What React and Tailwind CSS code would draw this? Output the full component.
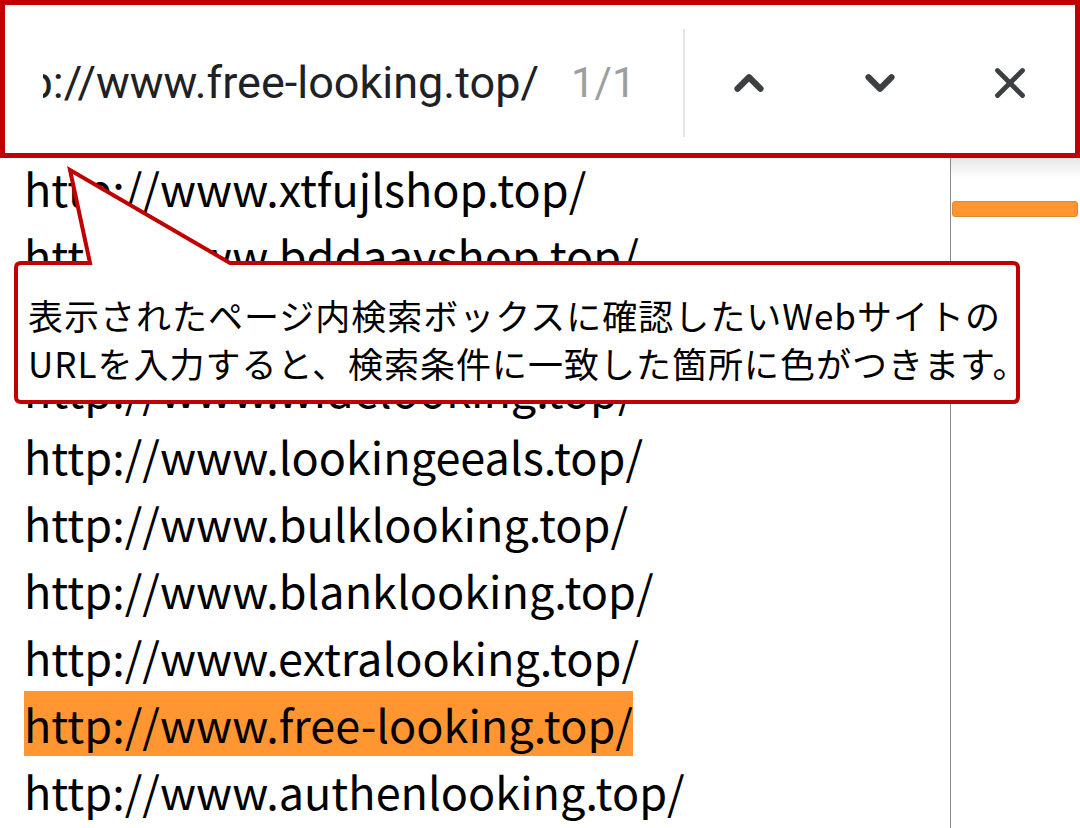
import { ChevronUp, ChevronDown, X } from "lucide-react";

const urls = [
  "http://www.xtfujlshop.top/",
  "http://www.bddaayshop.top/",
  "http://www.mookilooking.top/",
  "http://www.widelooking.top/",
  "http://www.lookingeeals.top/",
  "http://www.bulklooking.top/",
  "http://www.blanklooking.top/",
  "http://www.extralooking.top/",
  "http://www.free-looking.top/",
  "http://www.authenlooking.top/",
];

const FindBar = () => (
  <div className="h-[158px] border-[5px] border-[#c00000] bg-white flex items-center pt-[7px] shrink-0">
    <div className="ml-[38px] w-[497px] h-[60px] pr-[1px] flex items-center justify-end overflow-hidden whitespace-nowrap font-['Roboto',sans-serif] text-[45px] text-[#202124]">
      http://www.free-looking.top/
    </div>
    <span className="ml-[31px] font-['Roboto',sans-serif] text-[42px] text-[#9e9e9e]">1/1</span>
    <div className="ml-[47px] w-[2px] h-[108px] bg-[#e3e3e3]" />
    <button className="ml-[39px] w-[50px] h-[50px] flex items-center justify-center text-[#3c4043]">
      <ChevronUp size={46} strokeWidth={3.2} />
    </button>
    <button className="ml-[81px] w-[50px] h-[50px] flex items-center justify-center text-[#3c4043]">
      <ChevronDown size={46} strokeWidth={3.2} />
    </button>
    <button className="ml-[80px] w-[50px] h-[50px] flex items-center justify-center text-[#3c4043]">
      <X size={60} strokeWidth={2.3} />
    </button>
  </div>
);

const Callout = () => (
  <div className="absolute left-0 top-0 w-[1080px] h-[420px] pointer-events-none">
    <svg width="1080" height="420" className="absolute left-0 top-0">
      <path
        d="M90 263 L70 170 L230 263 L1013 263 Q1018 263 1018 268 L1018 397 Q1018 402 1013 402 L21 402 Q16 402 16 397 L16 268 Q16 263 21 263 Z"
        fill="white"
        stroke="#c00000"
        strokeWidth="4"
        strokeLinejoin="miter"
      />
    </svg>
    <div className="absolute left-[28px] top-[291px] font-['Noto_Sans_CJK_JP',sans-serif] text-[35px] leading-[48px] tracking-[1px] text-black whitespace-nowrap">
      <div>表示されたページ内検索ボックスに確認したいWebサイトの</div>
      <div>URLを入力すると、検索条件に一致した箇所に色がつきます。</div>
    </div>
  </div>
);

export default function App() {
  return (
    <div className="relative w-[1080px] h-[828px] overflow-hidden bg-white flex flex-col">
      <FindBar />
      <div className="flex flex-1 min-h-0">
        <div className="w-[950px] pl-[24px] -mt-[4px] font-['Noto_Sans_CJK_JP',sans-serif] text-[45px] leading-[67px] text-black">
          {urls.map((u) =>
            u.includes("free-looking") ? (
              <div key={u}>
                <span className="bg-[#ff9632]">{u}</span>
              </div>
            ) : (
              <div key={u}>{u}</div>
            )
          )}
        </div>
        <div className="flex-1 border-l border-[#8a8a8a] bg-white">
          <div className="h-[20px] bg-gradient-to-b from-[#e6e6e6] to-white" />
          <div className="mt-[23px] ml-[1px] mr-[2px] h-[16px] rounded-[3px] bg-[#ff9632] border border-[#e0882e]" />
        </div>
      </div>
      <Callout />
    </div>
  );
}
